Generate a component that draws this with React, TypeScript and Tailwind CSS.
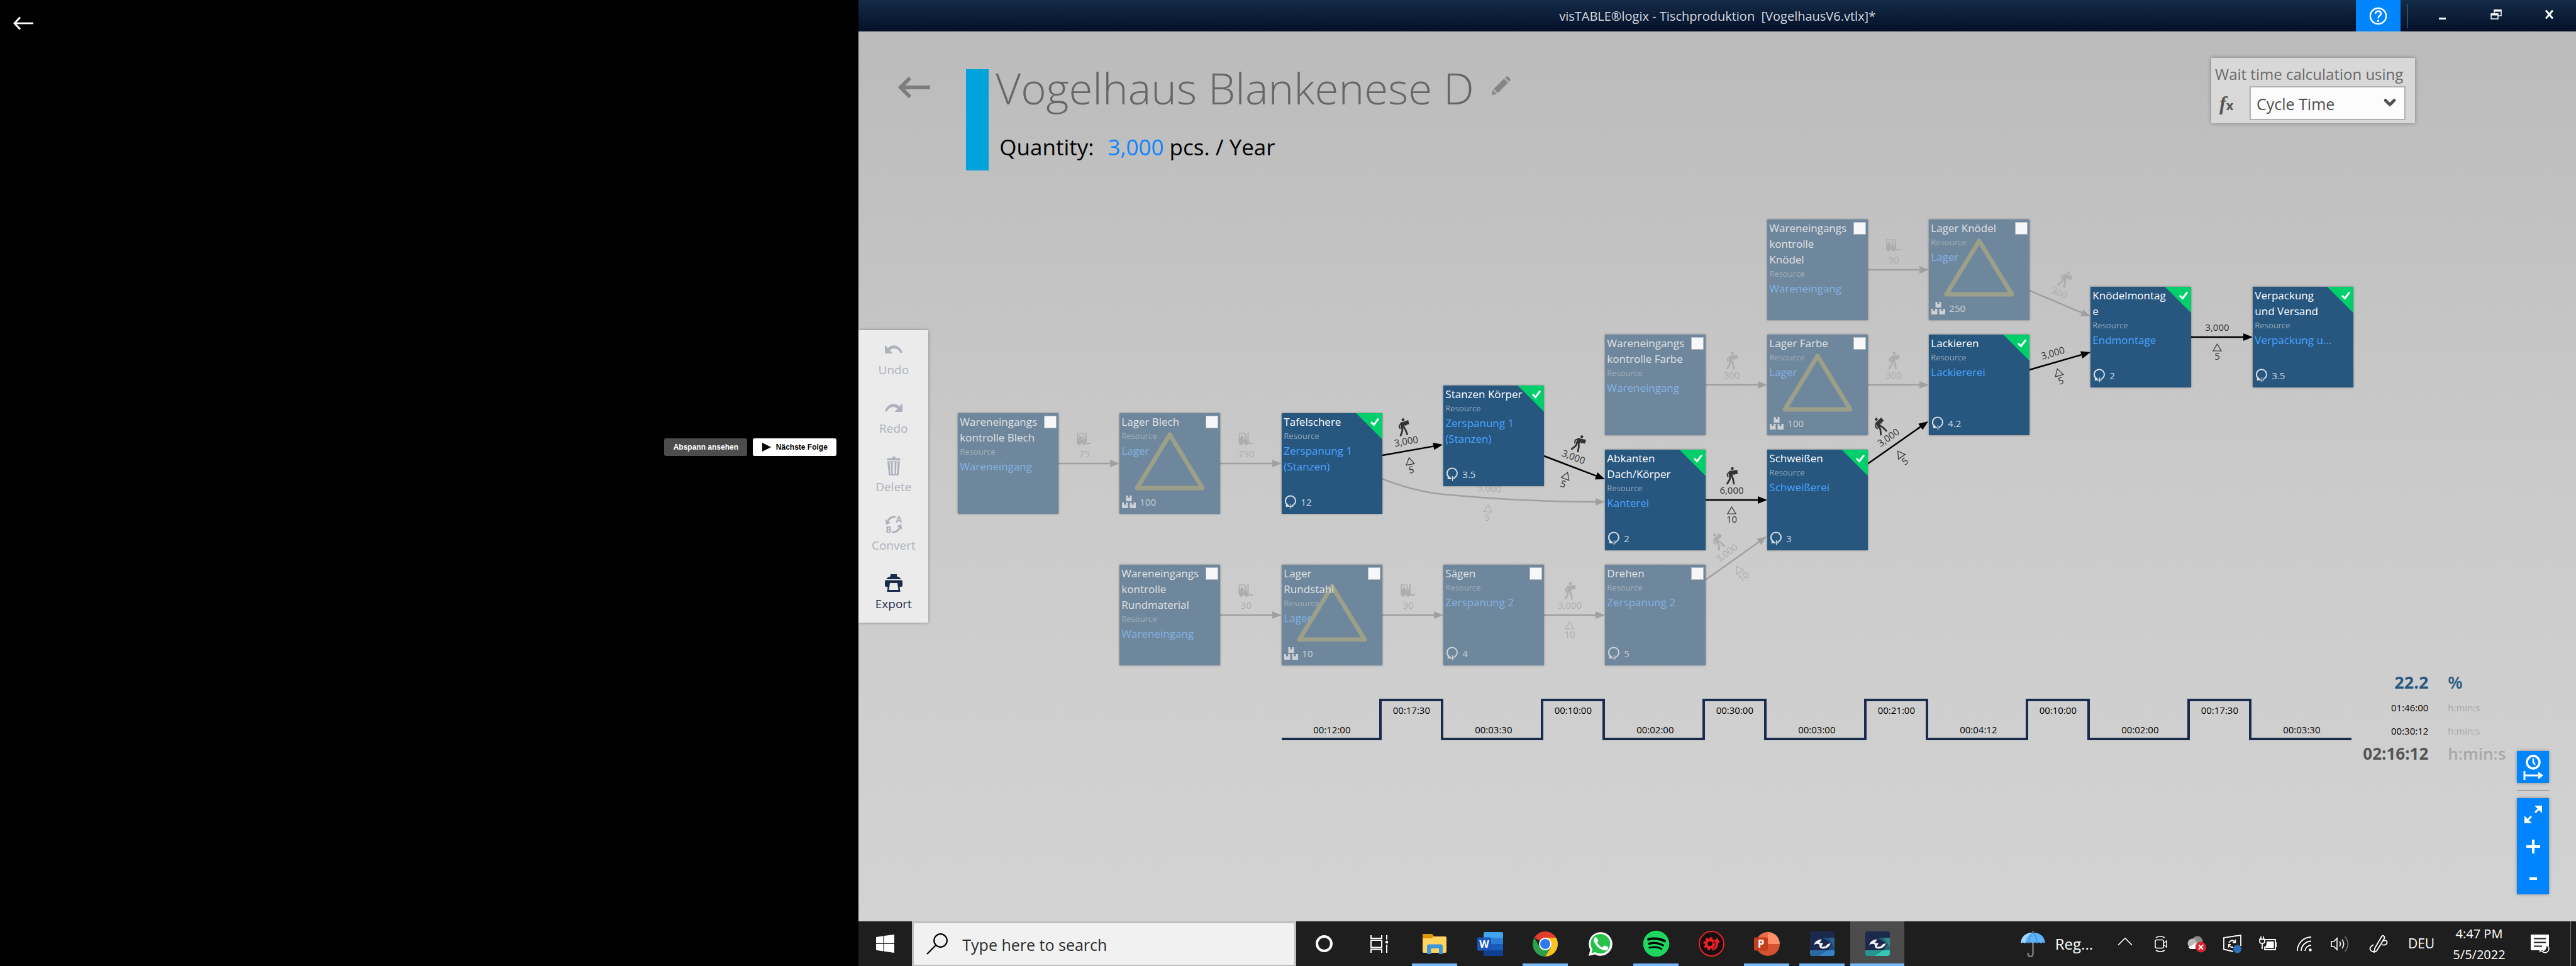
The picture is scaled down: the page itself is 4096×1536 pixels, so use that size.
import React, { useState } from "react";
import { FaSpotify } from "react-icons/fa";
import { ChevronDown, ChevronUp } from "lucide-react";

type NodeKind = "plain" | "store" | "cycle";
type ProcessNode = {
  id: string;
  x: number;
  y: number;
  title: string[];
  resource: string[];
  kind: NodeKind;
  value?: string;
  active?: boolean;
};

const COL = [0, 257, 515, 772, 1029, 1287, 1544, 1801, 2059];
const NODE_W = 160;

const nodes: ProcessNode[] = [
  { id: "we-blech", x: COL[0], y: 308, title: ["Wareneingangs", "kontrolle Blech"], resource: ["Wareneingang"], kind: "plain" },
  { id: "lager-blech", x: COL[1], y: 308, title: ["Lager Blech"], resource: ["Lager"], kind: "store", value: "100" },
  { id: "tafelschere", x: COL[2], y: 308, title: ["Tafelschere"], resource: ["Zerspanung 1", "(Stanzen)"], kind: "cycle", value: "12", active: true },
  { id: "stanzen", x: COL[3], y: 264, title: ["Stanzen Körper"], resource: ["Zerspanung 1", "(Stanzen)"], kind: "cycle", value: "3.5", active: true },
  { id: "we-rund", x: COL[1], y: 549, title: ["Wareneingangs", "kontrolle", "Rundmaterial"], resource: ["Wareneingang"], kind: "plain" },
  { id: "lager-rund", x: COL[2], y: 549, title: ["Lager", "Rundstahl"], resource: ["Lager"], kind: "store", value: "10" },
  { id: "saegen", x: COL[3], y: 549, title: ["Sägen"], resource: ["Zerspanung 2"], kind: "cycle", value: "4" },
  { id: "drehen", x: COL[4], y: 549, title: ["Drehen"], resource: ["Zerspanung 2"], kind: "cycle", value: "5" },
  { id: "we-farbe", x: COL[4], y: 183, title: ["Wareneingangs", "kontrolle Farbe"], resource: ["Wareneingang"], kind: "plain" },
  { id: "lager-farbe", x: COL[5], y: 183, title: ["Lager Farbe"], resource: ["Lager"], kind: "store", value: "100" },
  { id: "abkanten", x: COL[4], y: 366, title: ["Abkanten", "Dach/Körper"], resource: ["Kanterei"], kind: "cycle", value: "2", active: true },
  { id: "schweissen", x: COL[5], y: 366, title: ["Schweißen"], resource: ["Schweißerei"], kind: "cycle", value: "3", active: true },
  { id: "we-knoedel", x: COL[5], y: 0, title: ["Wareneingangs", "kontrolle", "Knödel"], resource: ["Wareneingang"], kind: "plain" },
  { id: "lager-knoedel", x: COL[6], y: 0, title: ["Lager Knödel"], resource: ["Lager"], kind: "store", value: "250" },
  { id: "lackieren", x: COL[6], y: 183, title: ["Lackieren"], resource: ["Lackiererei"], kind: "cycle", value: "4.2", active: true },
  { id: "montage", x: COL[7], y: 107, title: ["Knödelmontag", "e"], resource: ["Endmontage"], kind: "cycle", value: "2", active: true },
  { id: "versand", x: COL[8], y: 107, title: ["Verpackung", "und Versand"], resource: ["Verpackung u..."], kind: "cycle", value: "3.5", active: true },
];

type Carrier = "person" | "forklift";
type Edge = {
  from: [number, number];
  to: [number, number];
  count: string;
  carrier?: Carrier;
  batch?: string;
  active?: boolean;
};

const straight = (col: number, y: number): Pick<Edge, "from" | "to"> => ({
  from: [COL[col] + NODE_W, y],
  to: [COL[col + 1], y],
});

const edges: Edge[] = [
  { ...straight(0, 388), count: "75", carrier: "forklift" },
  { ...straight(1, 388), count: "750", carrier: "forklift" },
  { ...straight(1, 629), count: "30", carrier: "forklift" },
  { ...straight(2, 629), count: "30", carrier: "forklift" },
  { ...straight(3, 629), count: "3,000", carrier: "person", batch: "10" },
  { ...straight(4, 263), count: "300", carrier: "person" },
  { ...straight(5, 263), count: "300", carrier: "person" },
  { ...straight(5, 80), count: "30", carrier: "forklift" },
  { from: [1704, 113], to: [1801, 154], count: "300", carrier: "person" },
  { from: [1189, 573], to: [1286, 504], count: "3,000", carrier: "person", batch: "10" },
  { from: [675, 375], to: [771, 358], count: "3,000", carrier: "person", batch: "5", active: true },
  { from: [932, 376], to: [1029, 413], count: "3,000", carrier: "person", batch: "5", active: true },
  { ...straight(4, 446), count: "6,000", carrier: "person", batch: "10", active: true },
  { from: [1446, 389], to: [1543, 321], count: "3,000", carrier: "person", batch: "5", active: true },
  { from: [1704, 239], to: [1801, 211], count: "3,000", batch: "5", active: true },
  { ...straight(7, 187), count: "3,000", batch: "5", active: true },
];

function PersonGlyph() {
  return (
    <g fill="none" stroke="currentColor" strokeLinecap="round" strokeLinejoin="round">
      <circle cx="1" cy="-11" r="2.3" fill="currentColor" stroke="none" />
      <path d="M-3 -7 L2 -7 L1 1 L-4 1 Z" fill="currentColor" strokeWidth="1" />
      <path d="M-3 -6 L-7 -2 L-6 2" strokeWidth="2" />
      <path d="M0 1 L2 5 L3.5 13" strokeWidth="2.8" />
      <path d="M-2.5 1 L-3 6 L-7 13" strokeWidth="2.8" />
      <path d="M1 -5 L4 -2" strokeWidth="2" />
      <path d="M2 -8 L9 -9 L9.500 -2.500 L2.500 -1.500 Z" fill="currentColor" stroke="none" />
    </g>
  );
}

function ForkliftGlyph() {
  return (
    <g fill="none" stroke="currentColor" strokeWidth="1.500">
      <path d="M-9 4 V-9 H0 L3 2" />
      <path d="M5 -10 V7 H13" strokeWidth="2" />
      <path d="M-9 0 L-5 -3 L-3 1 L3 2 V6 H-9 Z" fill="currentColor" />
      <path d="M-6 -6 L-3 -2 L1 -1" strokeWidth="2" />
      <circle cx="-6" cy="7" r="2" fill="currentColor" />
      <circle cx="2" cy="7" r="2" fill="currentColor" />
    </g>
  );
}

function EdgeLabel({ edge, x, y, angle }: { edge: Omit<Edge, "from" | "to">; x: number; y: number; angle: number }) {
  const tone = edge.active ? "text-[#333333]" : "text-[#adadad]";
  const transform = `translate(${x} ${y}) rotate(${angle})`;
  return (
    <g transform={transform} className={tone}>
      {edge.carrier === "person" && (
        <g transform="translate(0 -39)">
          <PersonGlyph />
        </g>
      )}
      {edge.carrier === "forklift" && (
        <g transform="translate(-2 -39)">
          <ForkliftGlyph />
        </g>
      )}
      <text x="0" y="-10" textAnchor="middle" fontSize="15" fill="currentColor">
        {edge.count}
      </text>
      {edge.batch && (
        <>
          <path d="M0 11 L6.500 22 H-6.500 Z" fill="none" stroke="currentColor" strokeWidth="1.200" />
          <text x="0" y="36" textAnchor="middle" fontSize="15" fill="currentColor">
            {edge.batch}
          </text>
        </>
      )}
    </g>
  );
}

function EdgeLine({ edge }: { edge: Edge }) {
  const [x1, y1] = edge.from;
  const [x2, y2] = edge.to;
  const angle = (Math.atan2(y2 - y1, x2 - x1) * 180) / Math.PI;
  const length = Math.hypot(x2 - x1, y2 - y1);
  const shaft = length - 15;
  const cx = x1 + ((x2 - x1) * shaft) / length / 2;
  const cy = y1 + ((y2 - y1) * shaft) / length / 2;
  return (
    <>
      <g transform={`translate(${x1} ${y1}) rotate(${angle})`} className={edge.active ? "text-black" : "text-[#a0a0a0]"}>
        <path d={`M0 0 H${shaft}`} stroke="currentColor" strokeWidth="2.500" />
        <path d={`M${shaft} -6 L${length} 0 L${shaft} 6 Z`} fill="currentColor" />
      </g>
      <EdgeLabel edge={edge} x={cx} y={cy} angle={angle} />
    </>
  );
}

function EdgeLayer() {
  return (
    <svg className="pointer-events-none absolute inset-0 size-full overflow-visible" aria-hidden="true">
      <g className="text-[#a0a0a0]">
        <path d="M674 412 C710 426 740 434 772 437 S900 449 1015 449" fill="none" stroke="currentColor" strokeWidth="2.500" />
        <path d="M1014 443 L1029 449 L1014 455 Z" fill="currentColor" />
      </g>
      <EdgeLabel edge={{ count: "3,000", batch: "5", carrier: "person" }} x={844} y={443} angle={4} />
      {edges.map((edge) => (
        <EdgeLine key={`${edge.from}-${edge.to}`} edge={edge} />
      ))}
    </svg>
  );
}

function CycleIcon() {
  return (
    <svg viewBox="0 0 20 22" className="h-[22px] w-5" fill="none" stroke="currentColor" strokeWidth="2" aria-hidden="true">
      <path d="M12 17.200 A8 8 0 1 0 5 15.800" />
      <path d="M2.500 19 L3.500 12.500 L9.500 18.500 Z" fill="currentColor" stroke="none" />
      <path d="M10.500 14 V22 M7 18.500 H14" strokeWidth="1.200" />
    </svg>
  );
}

function BoxesIcon() {
  return (
    <svg viewBox="0 0 22 20" className="h-5 w-[22px]" fill="currentColor" aria-hidden="true">
      <path d="M6.500 0 H9.500 V4 L11 3 L12.500 4 V0 H15.500 V9 H6.500 Z" />
      <path d="M0 11 H3 V15 L4.500 14 L6 15 V11 H9.500 V20 H0 Z" />
      <path d="M12.500 11 H15.500 V15 L17 14 L18.500 15 V11 H22 V20 H12.500 Z" />
    </svg>
  );
}

function NodeCard({ node }: { node: ProcessNode }) {
  const [checked, setChecked] = useState(Boolean(node.active));
  const tone = node.active ? "bg-[#27567f] text-white" : "bg-[#6f879c] text-[#e2e3e4]";
  return (
    <article
      className={`absolute flex h-40 w-40 flex-col px-[3px] pt-px shadow-[0_0_3px_rgba(0,0,0,0.4)] ${tone}`}
      style={{ left: node.x, top: node.y }}
    >
      {node.kind === "store" && (
        <svg viewBox="0 0 160 160" className="absolute inset-0 size-full" aria-hidden="true">
          <path d="M80 34 L132 119 H28 Z" fill="none" stroke="#9ca089" strokeWidth="7" strokeLinejoin="round" />
        </svg>
      )}
      <h2 className="relative text-[17px] leading-[25px] whitespace-nowrap">
        {node.title.map((line) => (
          <span key={line} className="block">
            {line}
          </span>
        ))}
      </h2>
      <span className={`relative text-[13px] leading-[21px] ${node.active ? "text-[#93a8bb]" : "text-[#a2aeb9]"}`}>Resource</span>
      <a
        href="#resource"
        className={`relative text-[17px] leading-[25px] whitespace-nowrap ${node.active ? "text-[#4ba5ff]" : "text-[#82b3e6]"}`}
      >
        {node.resource.map((line) => (
          <span key={line} className="block">
            {line}
          </span>
        ))}
      </a>
      {node.value && (
        <div className={`relative mt-auto mb-2 flex items-center gap-[6px] pl-px text-[15px] leading-[22px] ${node.active ? "text-[#d3dde6]" : "text-[#cdd1d5]"}`}>
          {node.kind === "store" ? <BoxesIcon /> : <CycleIcon />}
          <span>{node.value}</span>
        </div>
      )}
      {node.active ? (
        <label className="absolute top-0 right-0 size-[42px]">
          <input
            type="checkbox"
            aria-label={node.title.join("")}
            checked={checked}
            onChange={(e) => setChecked(e.target.checked)}
            className="absolute inset-0 size-full appearance-none bg-[#00cf6b] [clip-path:polygon(0_0,100%_0,100%_100%)]"
          />
          <svg viewBox="0 0 16 14" className="pointer-events-none absolute top-[7px] right-[4px] h-[14px] w-4" fill="none" stroke="#ffffff" strokeWidth="3" aria-hidden="true">
            <path d="M2 7 L6.500 11.500 L14 1.500" />
          </svg>
        </label>
      ) : (
        <input
          type="checkbox"
          aria-label={node.title.join("")}
          checked={checked}
          onChange={(e) => setChecked(e.target.checked)}
          className="absolute top-1 right-[3px] size-5 appearance-none border border-[#b5b9bd] bg-[#f6f7f9]"
        />
      )}
    </article>
  );
}

const timeline = [
  ["00:12:00", "00:17:30"],
  ["00:03:30", "00:10:00"],
  ["00:02:00", "00:30:00"],
  ["00:03:00", "00:21:00"],
  ["00:04:12", "00:10:00"],
  ["00:02:00", "00:17:30"],
  ["00:03:30", ""],
];

function Timeline() {
  return (
    <ol className="mt-[46px] ml-[515px] flex h-[66px] text-[15px] leading-5 text-black">
      {timeline.map(([work, wait], i) => (
        <React.Fragment key={i}>
          <li className="flex w-[159px] items-end justify-center border-b-4 border-[#1b2b4b] pb-[3px]">{work}</li>
          {wait && (
            <li className="-ml-1 flex w-[102px] items-start justify-center border-x-4 border-t-4 border-[#1b2b4b] pt-[4px]">{wait}</li>
          )}
        </React.Fragment>
      ))}
    </ol>
  );
}

function Totals() {
  return (
    <dl className="grid grid-cols-[122px_auto] grid-rows-[40px_40px_34px_38px] items-center gap-x-[31px] whitespace-nowrap text-[15px]">
      <dt className="text-right text-[27px] font-bold text-[#27567f]">22.2</dt>
      <dd className="text-[27px] font-semibold text-[#27567f]">%</dd>
      <dt className="text-right text-black">01:46:00</dt>
      <dd className="text-[#a8a8a8]">h:min:s</dd>
      <dt className="text-right text-black">00:30:12</dt>
      <dd className="text-[#a8a8a8]">h:min:s</dd>
      <dt className="text-right text-[26px] font-bold text-[#555555]">02:16:12</dt>
      <dd className="text-[26px] font-semibold text-[#a8a8a8]">h:min:s</dd>
    </dl>
  );
}

const UndoIcon = ({ flip = false }: { flip?: boolean }) => (
  <svg viewBox="0 0 28 15" className={flip ? "h-[15px] w-7 -scale-x-100" : "h-[15px] w-7"} aria-hidden="true">
    <path d="M0 0.500 V14 H12.500 L8 9 C12 4.500 20 4 25 13.500 L28 12.500 C23 0 12 -1.500 5 5.500 Z" fill="currentColor" />
  </svg>
);

const TrashIcon = () => (
  <svg viewBox="0 0 22 30" className="h-[30px] w-[22px]" fill="currentColor" aria-hidden="true">
    <path d="M8.500 0 H13.500 V2.500 H19 Q22 2.500 22 6 H0 Q0 2.500 3 2.500 H8.500 Z" />
    <path fillRule="evenodd" d="M1 7.500 H21 L19 28 Q18.800 30 17 30 H5 Q3.200 30 3 28 Z M4.500 9 L5.800 28 H7.300 L6.500 9 Z M9.500 9 V28 H12.500 V9 Z M15.500 9 L14.700 28 H16.200 L17.500 9 Z" />
  </svg>
);

const ConvertIcon = () => (
  <svg viewBox="-2 -6 32 40" className="h-10 w-8 overflow-visible" fill="currentColor" aria-hidden="true">
    <path d="M17 0.500 C11 -0.500 5 3 3.500 8 L0.500 5.500 L2 14.500 L9.500 11 L6 10 C7 6 11 3 17 3.200 Z" />
    <path d="M11 27.500 C17 28.500 23 25 24.500 20 L27.500 22.500 L26 13.500 L18.500 17 L22 18 C21 22 17 25 11 24.800 Z" />
    <text x="22" y="11" textAnchor="middle" fontSize="14" fontWeight="700">
      A
    </text>
    <text x="6" y="27" textAnchor="middle" fontSize="14" fontWeight="700">
      B
    </text>
  </svg>
);

const PrinterIcon = () => (
  <svg viewBox="0 0 28 28" className="size-7" fill="currentColor" aria-hidden="true">
    <path d="M9 0 H19 V3.500 Q24 4.500 26 8 H2 Q4 4.500 9 3.500 Z" />
    <path fillRule="evenodd" d="M2 9.500 H26 Q28 9.500 28 11.500 V18 Q28 20 26 20 H23.500 L24.500 28 H3.500 L4.500 20 H2 Q0 20 0 18 V11.500 Q0 9.500 2 9.500 Z M8 14 L6.500 25 H21.500 L20 14 Z" />
  </svg>
);

const tools = [
  { label: "Undo", icon: <UndoIcon />, enabled: false },
  { label: "Redo", icon: <UndoIcon flip />, enabled: false },
  { label: "Delete", icon: <TrashIcon />, enabled: false },
  { label: "Convert", icon: <ConvertIcon />, enabled: false },
  { label: "Export", icon: <PrinterIcon />, enabled: true },
];

function Toolbar() {
  return (
    <nav aria-label="Tools" className="mt-[176px] flex w-[111px] shrink-0 flex-col self-start bg-[#ebebeb] shadow-[0_0_5px_rgba(0,0,0,0.35)]">
      {tools.map((tool) => (
        <button
          key={tool.label}
          type="button"
          disabled={!tool.enabled}
          className="flex h-[93px] flex-col items-center pt-[15px] text-[#1b2b4b] disabled:text-[#adb1bb]"
        >
          <span className="flex h-[30px] items-center">{tool.icon}</span>
          <span className="mt-[4px] text-[19px] leading-7">{tool.label}</span>
        </button>
      ))}
    </nav>
  );
}

function ZoomControls() {
  const button = "flex size-[51px] items-center justify-center bg-[#0085ff] text-white";
  return (
    <div className="mr-[43px] mb-[43px] ml-auto flex w-[51px] shrink-0 flex-col self-end">
      <button type="button" aria-label="Show time axis" className={`${button} shadow-[0_0_5px_rgba(0,0,0,0.35)]`}>
        <svg viewBox="0 0 34 42" className="h-[42px] w-[34px]" fill="none" stroke="currentColor" strokeWidth="3.500" aria-hidden="true">
          <circle cx="17" cy="13" r="10" />
          <path d="M17 7 V13 L20 17" strokeWidth="2.500" />
          <path d="M3 27 V41" strokeWidth="3" />
          <path d="M4 34 H28" strokeWidth="3" />
          <path d="M25 28 L33 34 L25 40 Z" fill="currentColor" stroke="none" />
        </svg>
      </button>
      <hr className="mt-[11px] mb-[11px] border-t-2 border-[#a5a5a5]" />
      <div className="flex flex-col shadow-[0_0_5px_rgba(0,0,0,0.35)]">
        <button type="button" aria-label="Fit to window" className={button}>
          <svg viewBox="0 0 28 28" className="size-7" fill="none" stroke="currentColor" strokeWidth="3" aria-hidden="true">
            <path d="M17 11 L25 3 M11 17 L3 25" />
            <path d="M16 0 H28 V12 Z M0 16 V28 H12 Z" fill="currentColor" stroke="none" />
          </svg>
        </button>
        <button type="button" aria-label="Zoom in" className={button}>
          <svg viewBox="0 0 22 22" className="size-[22px]" stroke="currentColor" strokeWidth="4" aria-hidden="true">
            <path d="M11 0 V22 M0 11 H22" />
          </svg>
        </button>
        <button type="button" aria-label="Zoom out" className={button}>
          <svg viewBox="0 0 12 4" className="h-1 w-3" stroke="currentColor" strokeWidth="4" aria-hidden="true">
            <path d="M0 2 H12" />
          </svg>
        </button>
      </div>
    </div>
  );
}

function TitleBar() {
  return (
    <header className="grid h-[50px] shrink-0 grid-cols-[1fr_auto_1fr] items-center bg-linear-to-b from-[#142c47] to-[#061029] text-white">
      <span />
      <h1 className="pt-[2px] text-[20px] whitespace-pre text-[#d5dbe1]">visTABLE®logix - Tischproduktion  [VogelhausV6.vtlx]*</h1>
      <div className="flex h-full items-center justify-end">
        <button type="button" aria-label="Help" className="flex h-full w-[71px] items-center justify-center bg-[#0085ff]">
          <svg viewBox="0 0 30 30" className="size-[29px]" fill="none" stroke="currentColor" strokeWidth="2.500" aria-hidden="true">
            <circle cx="15" cy="15" r="13" />
            <path d="M10.500 11.500 Q10.500 7 15 7 Q19.500 7 19.500 11 Q19.500 13 17 14.800 Q15 16.200 15 19" />
            <path d="M15 21.500 V24.500" strokeWidth="3" />
          </svg>
        </button>
        <span className="ml-[11px] mr-[12px] h-[39px] w-px bg-[#5b6672]" />
        <button type="button" aria-label="Minimize" className="flex h-full w-[85px] items-center justify-center">
          <span className="mt-2 h-[3px] w-[11px] bg-white" />
        </button>
        <button type="button" aria-label="Restore" className="flex h-full w-[85px] items-center justify-center">
          <svg viewBox="0 0 18 16" className="mb-1 h-4 w-[18px]" fill="none" stroke="currentColor" strokeWidth="1.500" aria-hidden="true">
            <path d="M6 6 V1 H17 V10 H12" />
            <path d="M6 2 H17 M1 8 H12" strokeWidth="3" />
            <path d="M1 7 H12 V15 H1 Z" />
          </svg>
        </button>
        <button type="button" aria-label="Close" className="flex h-full w-[85px] items-center justify-center">
          <svg viewBox="0 0 15 14" className="mb-1 h-[14px] w-[15px]" stroke="currentColor" strokeWidth="3" aria-hidden="true">
            <path d="M2 0.500 L13 13.500 M13 0.500 L2 13.500" />
          </svg>
        </button>
      </div>
    </header>
  );
}

function ProductHeader() {
  return (
    <div className="flex h-[299px] shrink-0 items-start">
      <button type="button" aria-label="Back" className="mt-[72px] ml-[63px] text-[#7d7d7d]">
        <svg viewBox="0 0 52 34" className="h-[34px] w-[52px]" fill="none" stroke="currentColor" strokeWidth="6" aria-hidden="true">
          <path d="M4 17 H51" />
          <path d="M19 2 L4 17 L19 32" />
        </svg>
      </button>
      <div className="mt-[60px] ml-[56px] h-[161px] w-[36px] bg-[#00a2dc]" />
      <div className="ml-[11px] flex flex-col">
        <div className="mt-[40px] flex items-start gap-[28px]">
          <h2 className="text-[69px] leading-[98px] font-light text-[#666666]">Vogelhaus Blankenese D</h2>
          <button type="button" aria-label="Rename" className="mt-[31px] text-[#858585]">
            <svg viewBox="0 0 30 30" className="size-[30px]" fill="currentColor" aria-hidden="true">
              <path d="M0 30 L1.500 22 L8 28.500 Z" />
              <path d="M3 20.500 L19.500 4 L26 10.500 L9.500 27 Z" />
              <path d="M21 2.500 L23 0.800 Q24.500 -0.400 26 1 L29 4 Q30.400 5.500 29 7 L27.500 9 Z" />
            </svg>
          </button>
        </div>
        <p className="mt-[18px] ml-[6px] flex text-[35px] leading-[56px] text-black">
          <span>Quantity:</span>
          <button type="button" className="ml-[22px] text-[#0d84ff]">
            3,000
          </button>
          <span className="ml-[9px]">pcs. / Year</span>
        </p>
      </div>
      <section className="mt-[42px] mr-[256px] ml-auto flex h-[104px] w-[324px] flex-col bg-[#d8d8d8] pl-[6px] shadow-[0_0_6px_rgba(0,0,0,0.35)]">
        <label htmlFor="wait-mode" className="mt-[7px] text-[24px] leading-[38px] whitespace-nowrap text-[#6a6a6a]">
          Wait time calculation using
        </label>
        <div className="flex items-center">
          <span className="w-[55px] pl-[7px] text-[#555555]">
            <i className="font-['Liberation_Serif'] text-[32px] leading-none font-bold">f</i>
            <b className="text-[20px] leading-none">x</b>
          </span>
          <div className="relative">
            <select id="wait-mode" className="h-[54px] w-[248px] appearance-none border-2 border-[#b0b0b0] bg-[#fcfcfc] pt-[3px] pl-[9px] text-[25px] font-medium text-[#4f4f4f]">
              <option>Cycle Time</option>
            </select>
            <ChevronDown className="pointer-events-none absolute top-[12px] right-[11px] size-[28px] text-[#505050]" strokeWidth={4} />
          </div>
        </div>
      </section>
    </div>
  );
}

const WordIcon = () => (
  <svg viewBox="0 0 41 38" className="h-[38px] w-[41px]" aria-hidden="true">
    <rect x="10" width="31" height="38" rx="2" fill="#41a5ee" />
    <rect x="10" y="9.500" width="31" height="9.500" fill="#2b7cd3" />
    <rect x="10" y="19" width="31" height="9.500" fill="#185abd" />
    <path d="M10 28.500 H41 V36 Q41 38 39 38 H12 Q10 38 10 36 Z" fill="#103f91" />
    <rect y="8.500" width="22" height="21" rx="2" fill="#1a56b8" />
    <text x="11" y="25" textAnchor="middle" fontSize="16" fontWeight="700" fill="#ffffff">
      W
    </text>
  </svg>
);

const PowerPointIcon = () => (
  <svg viewBox="0 0 41 38" className="h-[38px] w-[41px]" aria-hidden="true">
    <path d="M22 0 A19 19 0 0 0 3 19 H22 Z" fill="#ed6c47" />
    <path d="M22 0 A19 19 0 0 1 41 19 H22 Z" fill="#ff8f6b" />
    <path d="M3 19 A19 19 0 0 0 41 19 Z" fill="#d35230" />
    <rect y="8.500" width="22" height="21" rx="2" fill="#c43e1c" />
    <text x="11" y="25" textAnchor="middle" fontSize="17" fontWeight="700" fill="#ffffff">
      P
    </text>
  </svg>
);

const ChromeIcon = () => (
  <svg viewBox="0 0 40 40" className="size-10" aria-hidden="true">
    <path d="M20 20 L2.700 10 A20 20 0 0 1 37.300 10 Z" fill="#e33b2e" />
    <path d="M20 10 H37.300 A20 20 0 0 1 20 40 L28.700 25 Z" fill="#fcc31e" />
    <path d="M2.700 10 A20 20 0 0 0 20 40 L28.700 25 L11.300 25 Z" fill="#2da04e" />
    <circle cx="20" cy="20" r="10" fill="#ffffff" />
    <circle cx="20" cy="20" r="8" fill="#2f7bee" />
  </svg>
);

const WhatsAppIcon = () => (
  <svg viewBox="0 0 38 38" className="size-[38px]" aria-hidden="true">
    <path d="M0 38 L2.600 28.200 A18.800 18.800 0 1 1 9.800 35.400 Z" fill="#ffffff" />
    <path d="M4.500 33.500 L6 27.600 A15.600 15.600 0 1 1 10.800 32 Z" fill="#27c14c" />
    <path
      d="M13.900 10.200 C13.400 9.200 12.900 9.200 12.300 9.200 C11 9.200 9.300 10.900 9.300 13.800 C9.300 16.700 11.400 19.500 11.700 19.900 C12 20.300 15.900 26.500 21.900 28.800 C26.900 30.700 27.900 30.300 29 30.200 C30.100 30.100 32.200 28.700 32.200 26.300 C32.200 24.900 31.900 24.700 31.300 24.400 L27 22.400 C26.400 22.200 26 22.100 25.500 22.800 L23.600 25.100 C23.200 25.600 22.900 25.600 22.200 25.300 C19.600 24 16.900 21.700 15 18.500 C14.600 17.800 15 17.500 16.300 15.700 C16.500 15.300 16.400 14.900 16.200 14.500 Z"
      fill="#ffffff"
      transform="translate(-1 -1)"
    />
  </svg>
);

const GearArrowIcon = () => (
  <svg viewBox="0 0 41 41" className="size-[41px]" aria-hidden="true">
    <circle cx="20.500" cy="20.500" r="19.500" fill="#141011" stroke="#ef2027" strokeWidth="2" />
    <circle cx="18" cy="20.500" r="6" fill="none" stroke="#ef2027" strokeWidth="4.500" />
    <circle cx="18" cy="20.500" r="9" fill="none" stroke="#ef2027" strokeWidth="3" strokeDasharray="4 3" />
    <path d="M17 33 Q27 30 26.500 19 H23 L29 10.500 L35 19 H31.500 Q32 32 17 33 Z" fill="#ef2027" stroke="#141011" strokeWidth="1" />
  </svg>
);

const VisTableIcon = ({ teal = false }: { teal?: boolean }) => (
  <svg viewBox="0 0 39 39" className="size-[39px]" aria-hidden="true">
    <rect width="39" height="39" rx="3" fill="#1b2a4c" />
    <path d="M20 10 H39 V30 H29 L35 20 Z" fill={teal ? "#24696f" : "#1f4a7d"} />
    <path d="M29 10 H39 V25 Z" fill={teal ? "#2f8b8b" : "#2b6196"} />
    <path d="M0 30 H39 V36 Q39 39 36 39 H3 Q0 39 0 36 Z" fill={teal ? "#27948f" : "#2c68a6"} />
    <path d="M15 39 L28 30 H39 V36 L36 39 Z" fill={teal ? "#36c5b0" : "#3783c6"} />
    <path d="M6 22 Q8 13 19 12.500 L15 18.500 H21 L18 24.500 Q25 25 28 20 L33 19 Q30 27 21 27.500 Q14 27 15 21 Q10 18 6 22 Z" fill="#f1f3f5" />
  </svg>
);

const ExplorerIcon = () => (
  <svg viewBox="0 0 38 32" className="h-8 w-[38px]" aria-hidden="true">
    <path d="M0 2 Q0 0 2 0 H15 L18 4 H36 Q38 4 38 6 V28 Q38 30 36 30 H2 Q0 30 0 28 Z" fill="#ffd35f" />
    <path d="M0 2 Q0 0 2 0 H15 L18 3.500 L15 7 H0 Z" fill="#dd9400" />
    <path d="M7 32 V20 Q7 16.500 11 16.500 H28 Q32 16.500 32 20 V32 H26 V23 H13.500 V32 Z" fill="#3b97dd" />
  </svg>
);

const TaskViewIcon = () => (
  <svg viewBox="0 0 28 28" className="size-7" fill="none" stroke="#ffffff" strokeWidth="2" aria-hidden="true">
    <path d="M1 0 V5 H18 V0 M1 28 V22.500 H18 V28 M1 8 H18 V19.500 H1 Z M26 0 V7 M26 15 V28" />
    <circle cx="26" cy="11" r="2.200" fill="#ffffff" stroke="none" />
  </svg>
);

const CortanaIcon = () => <span className="size-[27px] rounded-full border-4 border-white" />;

const apps: { label: string; icon: React.ReactNode; open?: boolean; current?: boolean }[] = [
  { label: "Cortana", icon: <CortanaIcon /> },
  { label: "Task View", icon: <TaskViewIcon /> },
  { label: "File Explorer", icon: <ExplorerIcon />, open: true },
  { label: "Word", icon: <WordIcon /> },
  { label: "Chrome", icon: <ChromeIcon />, open: true },
  { label: "WhatsApp", icon: <WhatsAppIcon /> },
  {
    label: "Spotify",
    icon: (
      <span className="rounded-full bg-black">
        <FaSpotify className="size-[43px] text-[#1fd760]" />
      </span>
    ),
    open: true,
  },
  { label: "Updater", icon: <GearArrowIcon /> },
  { label: "PowerPoint", icon: <PowerPointIcon />, open: true },
  { label: "visTABLE", icon: <VisTableIcon />, open: true },
  { label: "visTABLE logix", icon: <VisTableIcon teal />, open: true, current: true },
];

const trayIcons: { label: string; icon: React.ReactNode }[] = [
  { label: "Show hidden icons", icon: <ChevronUp className="mb-2 size-[42px]" strokeWidth={1} /> },
  {
    label: "Meet now",
    icon: (
      <svg viewBox="0 0 20 26" className="h-[26px] w-5" fill="none" stroke="currentColor" strokeWidth="1.500" aria-hidden="true">
        <path d="M2 3 Q9 -1.500 16 3 M2 23 Q9 27.500 16 23" />
        <rect x="1" y="6.500" width="13" height="13" rx="2" />
        <path d="M14 12 L19 8 V18 L14 14" />
      </svg>
    ),
  },
  {
    label: "Cloud sync error",
    icon: (
      <svg viewBox="0 0 30 28" className="h-7 w-[30px]" aria-hidden="true">
        <circle cx="16" cy="10" r="8.500" fill="#8c8c8c" />
        <circle cx="8" cy="13" r="7.500" fill="#b9b9b9" />
        <path d="M2 19 Q8 17 13 12 V22 H5 Q2 21 2 19 Z" fill="#ffffff" />
        <circle cx="21.500" cy="19" r="8.500" fill="#d92430" />
        <path d="M18 15.500 L25 22.500 M25 15.500 L18 22.500" stroke="#ffffff" strokeWidth="2" />
      </svg>
    ),
  },
  {
    label: "Windows Update",
    icon: (
      <svg viewBox="0 0 30 30" className="size-[30px]" fill="none" stroke="currentColor" strokeWidth="1.800" aria-hidden="true">
        <path d="M16 27 L1 23.500 V5 L28 1 V18" />
        <path d="M9 13 Q14 6 19 12 M19.500 8 V12.500 H15 M16 20 Q11 21 9 16 M8.500 20.500 V16 H12" />
        <circle cx="22.500" cy="23" r="6.500" fill="#2a70be" stroke="none" />
      </svg>
    ),
  },
  {
    label: "Battery",
    icon: (
      <svg viewBox="0 0 29 24" className="h-6 w-[29px]" fill="none" stroke="currentColor" strokeWidth="1.800" aria-hidden="true">
        <path d="M9 5 H26 V21 H9 V16 M27 9 V17" />
        <path d="M12 8 H23.500 V18.500 H9.500 L12 12 Z" fill="currentColor" stroke="none" />
        <path d="M3 0 V4 M7 0 V4 M1 4.500 H9 V8 Q9 11 5 11 Q1 11 1 8 Z M5 11 V20" />
      </svg>
    ),
  },
  {
    label: "Network",
    icon: (
      <svg viewBox="0 0 24 24" className="size-6" fill="none" stroke="currentColor" strokeWidth="1.800" aria-hidden="true">
        <path d="M1 23 A22 22 0 0 1 23 1 M7 23 A16 16 0 0 1 23 7.500 M13 23 A10 10 0 0 1 23 14" />
        <circle cx="21.500" cy="21.500" r="2.300" fill="currentColor" stroke="none" />
      </svg>
    ),
  },
  {
    label: "Volume",
    icon: (
      <svg viewBox="0 0 30 26" className="h-[26px] w-[30px]" fill="none" stroke="currentColor" strokeWidth="1.600" aria-hidden="true">
        <path d="M1 9 H5 L10 4 V22 L5 17 H1 Z" />
        <path d="M14 9 Q17 13 14 17 M18 6 Q23.500 13 18 20" />
        <path d="M22.500 1 Q32 13 22.500 25" stroke="#777777" />
      </svg>
    ),
  },
  {
    label: "Windows Ink",
    icon: (
      <svg viewBox="0 0 30 28" className="ml-2 h-7 w-[30px]" fill="none" stroke="currentColor" strokeWidth="1.800" aria-hidden="true">
        <path d="M9 21 L20 2 Q22 -0.500 24 2 Q25 3.500 24 5.500 L12 25 L8 27 Z" />
        <path d="M7 15 Q-1 20 2.500 24 Q5 27 8 26 M22 9 Q29 7 28.500 12 Q27 17 20 15" />
      </svg>
    ),
  },
];

function Taskbar() {
  return (
    <footer className="flex h-[71px] shrink-0 items-stretch bg-[#1e1e1e] text-white">
      <button type="button" aria-label="Start" className="flex w-[85px] items-center justify-center">
        <svg viewBox="0 0 29 29" className="size-[29px]" fill="#ffffff" aria-hidden="true">
          <path d="M0 4 L11.500 2.300 V13.700 H0 Z M12.700 2 L29 0 V13.700 H12.700 Z M0 14.900 H11.500 V26.500 L0 24.700 Z M12.700 14.900 H29 V29 L12.700 26.700 Z" />
        </svg>
      </button>
      <label className="flex w-[611px] items-center border-[3px] border-b-2 border-[#bfbfbf] bg-[#f1f1f1] pl-[20px]">
        <svg viewBox="0 0 34 34" className="size-[34px]" fill="none" stroke="#000000" strokeWidth="2.200" aria-hidden="true">
          <circle cx="22.500" cy="11.500" r="10.300" />
          <path d="M15 19 L1 33" />
        </svg>
        <input
          type="text"
          aria-label="Search"
          placeholder="Type here to search"
          className="ml-[23px] w-[400px] bg-transparent pt-[2px] text-[25px] leading-9 placeholder:text-[#2b2b2b] placeholder:opacity-100"
        />
      </label>
      <div className="flex">
        {apps.map((app) => (
          <button key={app.label} type="button" aria-label={app.label} className="flex w-[88px] flex-col items-center">
            <span className={app.current ? "flex w-[86px] flex-1 items-center justify-center bg-[#4c4c4c]" : "flex w-[86px] flex-1 items-center justify-center"}>
              {app.icon}
            </span>
            {app.open && <span className={app.current ? "-mt-1 h-1 w-[86px] bg-[#76b9ff]" : "-mt-1 h-1 w-[72px] bg-[#76b9ff]"} />}
          </button>
        ))}
      </div>
      <button type="button" className="mr-[22px] ml-auto flex items-center gap-[16px] text-[24px]">
        <svg viewBox="0 0 39 42" className="h-[42px] w-[39px]" aria-hidden="true">
          <path d="M19.500 0 V4" stroke="#777777" strokeWidth="2" />
          <path d="M19.500 18 V36 Q19.500 41 15.500 41 Q11.500 41 11.500 35" fill="none" stroke="#7d7d7d" strokeWidth="2.500" />
          <path d="M0 20 Q2 3 19.500 3 Q37 3 39 20 Q35 17 32 20 Q29 17 26 20 Q22.500 17 19.500 20 Q16 17 13 20 Q10 17 7 20 Q4 17 0 20 Z" fill="#5db4fb" />
          <path d="M0 20 Q2 3 19.500 3 Q8 8 7 20 Q4 17 0 20 Z" fill="#a6d5ff" />
          <path d="M19.500 3 Q12 10 13 20 M19.500 3 Q27 10 26 20" fill="none" stroke="#2f7cc4" strokeWidth="1" />
        </svg>
        <span>Reg...</span>
      </button>
      <div className="flex">
        {trayIcons.map((item) => (
          <button key={item.label} type="button" aria-label={item.label} className="flex w-[57px] items-center justify-center">
            {item.icon}
          </button>
        ))}
      </div>
      <button type="button" className="w-[88px] text-[21px]">
        DEU
      </button>
      <button type="button" className="flex w-[96px] flex-col items-center justify-center text-[20px] leading-[33px]">
        <span>4:47 PM</span>
        <span>5/5/2022</span>
      </button>
      <button type="button" aria-label="Notifications" className="flex w-[97px] items-center justify-center">
        <svg viewBox="0 0 30 30" className="size-[30px]" aria-hidden="true">
          <path d="M0 0 H29 V18 L22 25 H18 L14 29 V25 H0 Z" fill="#ffffff" />
          <path d="M5 6.500 H24 M5 12.500 H24 M5 18.500 H18" stroke="#1e1e1e" strokeWidth="2" />
          <path d="M24 16 Q26 24 18 27 Q24 31 28 26 Q31 20 24 16 Z" fill="#1e1e1e" stroke="#ffffff" strokeWidth="1.500" />
        </svg>
      </button>
      <span className="mr-[8px] w-px bg-[#777777]" />
    </footer>
  );
}

function PlayerPane() {
  return (
    <aside className="flex min-w-0 flex-1 flex-col bg-black">
      <button type="button" aria-label="Back" className="mt-[26px] ml-[21px] self-start text-white">
        <svg viewBox="0 0 32 22" className="h-[22px] w-8" fill="none" stroke="currentColor" strokeWidth="2.800" aria-hidden="true">
          <path d="M2 11 H32" />
          <path d="M11 1.500 L2 11 L11 20.500" strokeWidth="3" />
        </svg>
      </button>
      <div className="my-auto flex justify-end gap-[9px] pr-[35px] pb-[162px] font-['Liberation_Sans',sans-serif] text-[12px] font-bold">
        <button type="button" className="flex h-7 w-[132px] items-center justify-center rounded-[3px] bg-[#4d4d4d] text-white">
          Abspann ansehen
        </button>
        <button type="button" className="flex h-7 w-[133px] items-center justify-center gap-2 rounded-[3px] bg-white text-black">
          <svg viewBox="0 0 14 14" className="size-[14px]" fill="currentColor" aria-hidden="true">
            <path d="M0 0 L14 7 L0 14 Z" />
          </svg>
          Nächste Folge
        </button>
      </div>
    </aside>
  );
}

export default function App() {
  return (
    <div className="flex min-h-screen font-['Open_Sans','Noto_Sans',sans-serif]">
      <PlayerPane />
      <div className="flex min-w-0 flex-[2] flex-col overflow-hidden">
        <TitleBar />
        <main className="flex flex-1 flex-col bg-linear-to-b from-[#bbbbbb] via-[#cacaca] to-[#d3d3d3]">
          <ProductHeader />
          <div className="flex flex-1">
            <Toolbar />
            <div className="ml-[47px] flex flex-col">
              <div className="relative h-[709px] w-[2219px]">
                <EdgeLayer />
                {nodes.map((node) => (
                  <NodeCard key={node.id} node={node} />
                ))}
              </div>
              <div className="mt-[7px] flex">
                <Timeline />
                <Totals />
              </div>
            </div>
            <ZoomControls />
          </div>
        </main>
        <Taskbar />
      </div>
    </div>
  );
}
